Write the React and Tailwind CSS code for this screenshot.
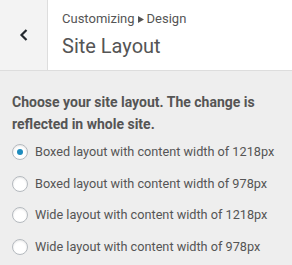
const OPTIONS = [
  'Boxed layout with content width of 1218px',
  'Boxed layout with content width of 978px',
  'Wide layout with content width of 1218px',
  'Wide layout with content width of 978px',
]

export default function App() {
  return (
    <div className="w-[292px] h-[265px] overflow-hidden bg-[#eeeeee] text-[#555d66] font-['Roboto',sans-serif]">
      {/* Header */}
      <div className="flex h-[71px] border-b border-[#dddddd] bg-white">
        <button className="w-[48px] flex items-center justify-center bg-[#f3f3f3] border-r border-[#dddddd] text-[#23282d]">
          <svg width="12" height="14" viewBox="0 0 12 14" fill="none">
            <path d="M8.5 2 L3.5 7 L8.5 12" stroke="currentColor" strokeWidth="2.2" />
          </svg>
        </button>
        <div className="pl-[14px] pt-[10px]">
          <p className="flex items-center text-[13px] leading-[18px] text-[#555]">
            Customizing
            <svg className="mx-[3px]" width="6" height="7" viewBox="0 0 6 7">
              <path d="M0 0 L6 3.5 L0 7 Z" fill="#555" />
            </svg>
            Design
          </p>
          <h1 className="text-[20px] leading-[26px] mt-[5px] text-[#555]">Site Layout</h1>
        </div>
      </div>

      {/* Body */}
      <div className="px-[12px] pt-[20px]">
        <p className="text-[14px] font-bold leading-[22px] text-[#555]">
          Choose your site layout. The change is reflected in whole site.
        </p>
        <div className="mt-[9px] flex flex-col gap-[15.5px]">
          {OPTIONS.map((o, i) => (
            <label key={o} className="flex items-center gap-[7px] whitespace-nowrap text-[12.7px] leading-[16px] text-[#555]">
              <span className="w-[16px] h-[16px] rounded-full bg-white border border-[#b4b9be] shadow-[inset_0_1px_2px_rgba(0,0,0,0.1)] flex items-center justify-center shrink-0">
                {i === 0 && <span className="w-[6px] h-[6px] rounded-full bg-[#1e8cbe]" />}
              </span>
              {o}
            </label>
          ))}
        </div>
      </div>
    </div>
  )
}
